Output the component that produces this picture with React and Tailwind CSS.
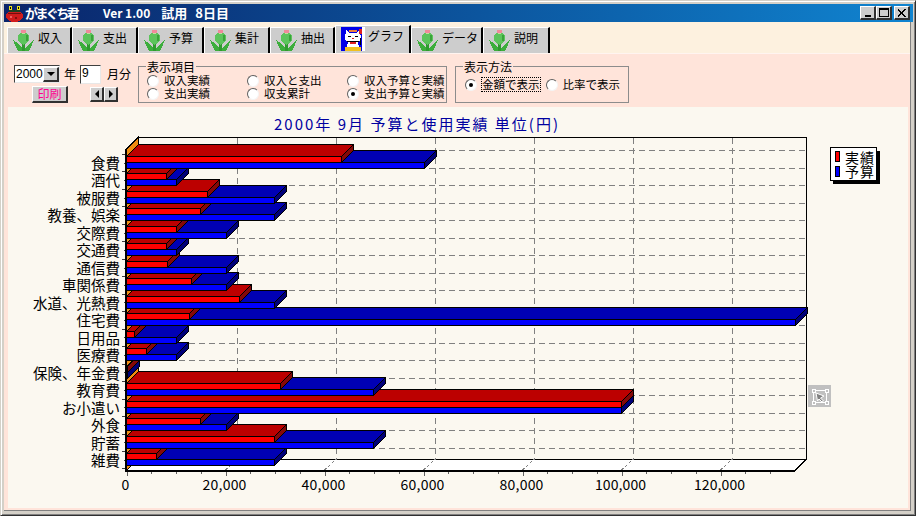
import React from 'react';

const jp = { fontFamily: '"Noto Sans CJK JP", "Noto Sans", sans-serif' };

const rows = [
  ['食費', 341, 424],
  ['酒代', 166, 176],
  ['被服費', 207, 274],
  ['教養、娯楽', 200, 274],
  ['交際費', 176, 226],
  ['交通費', 166, 176],
  ['通信費', 167, 226],
  ['車関係費', 191, 226],
  ['水道、光熱費', 239, 274],
  ['住宅費', 189, 795],
  ['日用品', 134, 176],
  ['医療費', 146, 176],
  ['保険、年金費', 127, 127],
  ['教育費', 280, 373],
  ['お小遣い', 621, 621],
  ['外食', 200, 226],
  ['貯蓄', 274, 373],
  ['雑費', 156, 274],
];

const X0 = 126.5;
const D = 12;

function Bar({ y, end, front, top, side }) {
  const pts = (a) => a.map((p) => p.join(',')).join(' ');
  return (
    <g stroke="#000" strokeWidth="1">
      <polygon points={pts([[X0, y], [X0 + D, y - D], [end + D, y - D], [end, y]])} fill={top} />
      <polygon points={pts([[end, y], [end + D, y - D], [end + D, y - D + 6], [end, y + 6]])} fill={side} />
      <rect x={X0} y={y} width={end - X0} height="6" fill={front} />
    </g>
  );
}

function Chart() {
  const order = rows.map((r, i) => ({ r, i })).reverse();
  const hLines = Array.from({ length: 18 }, (_, i) => 150 + 17.5 * i);
  const vLines = [237.5, 336.5, 435.5, 534.5, 633.5, 732.5];
  const xTicks = Array.from({ length: 27 }, (_, i) => X0 + 24.75 * i);
  const yTicks = Array.from({ length: 37 }, (_, i) => 154 + 8.735 * i);
  return (
    <svg viewBox="8 107 900 401" width="900" height="401" className="block" style={jp}>
      <g shapeRendering="crispEdges">
        <polygon points="126.5,149 138.5,137 138.5,459 126.5,470.5" fill="#f08c10" stroke="#000" />
        <rect x="138.5" y="137.5" width="668" height="321.5" fill="#fbf8f0" stroke="#000" />
        {hLines.map((y) => (
          <line key={y} x1="139" x2="806" y1={Math.round(y) + 0.5} y2={Math.round(y) + 0.5} stroke="#808080" strokeDasharray="6 4" />
        ))}
        {vLines.map((x) => (
          <line key={x} x1={x} x2={x} y1="138" y2="459" stroke="#808080" strokeDasharray="6 4" />
        ))}
        <polygon points="126.5,470.5 138.5,459 806.5,459 795,470.5" fill="#fff" stroke="#000" />
        {vLines.map((x) => (
          <line key={x} x1={x - 12} x2={x} y1="470" y2="459" stroke="#808080" strokeDasharray="3 2" />
        ))}
        {order.map(({ r, i }) => {
          const y = Math.round(156 + 17.47 * i) + 0.5;
          return (
            <g key={r[0]}>
              <Bar y={y + 6} end={r[2] + 0.5} front="#0000ff" top="#0000b4" side="#000078" />
              <Bar y={y} end={r[1] + 0.5} front="#ff0000" top="#bc0000" side="#840808" />
            </g>
          );
        })}
        <rect x="125" y="149" width="2" height="323" fill="#000" />
        <rect x="125" y="470" width="670" height="2" fill="#000" />
        {yTicks.map((y, i) => (
          <rect key={y} x={i % 2 ? 124 : 122} y={Math.round(y)} width={i % 2 ? 1 : 3} height="1" fill="#404040" />
        ))}
        {xTicks.map((x, i) => (
          <rect key={x} x={Math.round(x)} y="472" width="1" height={i % 4 ? 2 : 4} fill="#606060" />
        ))}
      </g>

      <text x="416" y="130" textAnchor="middle" fontSize="15" fill="#0000a0" textLength="284">2000年 9月 予算と使用実績 単位(円)</text>

      {rows.map((r, i) => (
        <text key={r[0]} x="120" y={169 + 17.47 * i} textAnchor="end" fontSize="14.5" fill="#000">{r[0]}</text>
      ))}

      {['0', '20,000', '40,000', '60,000', '80,000', '100,000', '120,000'].map((t, i) => (
        <text key={t} x={X0 - 1 + 99 * i} y="490" textAnchor="middle" fontSize="14" fill="#000" textLength={t.length === 1 ? undefined : t.length * 7.3}>{t}</text>
      ))}

      <g shapeRendering="crispEdges">
        <rect x="833" y="151" width="47" height="33" fill="#000" />
        <rect x="830.5" y="147.5" width="46" height="33" fill="#fff" stroke="#000" />
        <rect x="835.5" y="151.5" width="4" height="10" fill="#ff0000" stroke="#000" />
        <rect x="835.5" y="166.5" width="4" height="10" fill="#0000ff" stroke="#000" />
      </g>
      <text x="845" y="163" fontSize="14" fill="#000" textLength="29">実績</text>
      <text x="845" y="177" fontSize="14" fill="#000" textLength="29">予算</text>

      <g shapeRendering="crispEdges">
        <rect x="808" y="385" width="23" height="22" fill="#c0c0c0" />
        <rect x="813.5" y="390.5" width="13" height="12" fill="none" stroke="#fff" />
        <rect x="812" y="389" width="3" height="3" fill="#c0c0c0" stroke="#fff" />
        <rect x="825" y="389" width="3" height="3" fill="#c0c0c0" stroke="#fff" />
        <rect x="812" y="401" width="3" height="3" fill="#c0c0c0" stroke="#fff" />
        <rect x="825" y="401" width="3" height="3" fill="#c0c0c0" stroke="#fff" />
      </g>
      <polygon points="816,393 824,396 820.5,398 823.5,401 822,402 819,399 817.5,401" fill="#808080" stroke="#fff" strokeWidth="1" />
    </svg>
  );
}

function Tulip() {
  return (
    <svg width="21" height="21" viewBox="0 0 21 21" className="shrink-0" shapeRendering="crispEdges">
      <polygon points="0,10 3,12 9,18 10,21 5,21 3,17" fill="#3cae3c" />
      <polygon points="21,10 18,12 12,18 11,21 16,21 18,17" fill="#3cae3c" />
      <rect x="9" y="13" width="3" height="8" fill="#2f9a2f" />
      <ellipse cx="10.5" cy="8" rx="5.5" ry="6.5" fill="#5cc45c" />
      <rect x="13" y="5" width="2" height="6" fill="#3aa43a" />
      <rect x="8" y="0" width="5" height="3" fill="#f08a9a" />
      <rect x="9" y="3" width="3" height="1" fill="#c8d8a0" />
    </svg>
  );
}

function Cat() {
  return (
    <svg width="24" height="24" viewBox="0 0 24 24" className="shrink-0" shapeRendering="crispEdges">
      <rect width="24" height="24" fill="#0000e8" />
      <rect x="21" y="0" width="3" height="24" fill="#fff" />
      <path d="M5 3 L9 6 L15 6 L19 3 L20 12 L17 16 L19 22 L5 22 L7 16 L4 12 Z" fill="#fff" />
      <rect x="8" y="3" width="8" height="2" fill="#f08040" />
      <rect x="18" y="2" width="3" height="5" fill="#e02020" />
      <rect x="7" y="9" width="3" height="1" fill="#000" />
      <rect x="14" y="9" width="3" height="1" fill="#000" />
      <rect x="11" y="11" width="2" height="1" fill="#e02020" />
      <rect x="6" y="14" width="12" height="1" fill="#000" />
      <rect x="19" y="11" width="1" height="7" fill="#000" />
      <rect x="4" y="20" width="16" height="4" fill="#f0c020" />
      <rect x="9" y="15" width="6" height="2" fill="#e02020" />
    </svg>
  );
}

function AppIcon() {
  return (
    <svg width="17" height="17" viewBox="0 0 17 17" className="shrink-0" shapeRendering="crispEdges">
      <ellipse cx="8.5" cy="11" rx="8.5" ry="6" fill="#d01c1c" />
      <rect x="2" y="8" width="13" height="1" fill="#701010" />
      <rect x="4" y="11" width="2" height="2" fill="#f06060" />
      <rect x="9" y="12" width="2" height="2" fill="#801010" />
      <rect x="3" y="1" width="3" height="4" fill="#e8e020" />
      <rect x="11" y="1" width="3" height="4" fill="#e8e020" />
      <rect x="4" y="2" width="1" height="2" fill="#000" />
      <rect x="12" y="2" width="1" height="2" fill="#000" />
      <rect x="3" y="5" width="11" height="2" fill="#204020" />
    </svg>
  );
}

function Tab({ label, width, active }) {
  return (
    <div
      className={`flex items-center shrink-0 bg-[#cdcdcd] border-t border-l border-t-white border-l-white border-r-2 border-r-black ${active ? 'h-[28px] gap-[3px] pl-[5px] items-start pt-[1px]' : 'h-[26px] gap-[4px] pl-[5px]'}`}
      style={{ width }}
    >
      {active ? <Cat /> : <Tulip />}
      <span className={`text-[12px] leading-[16px] text-black ${active ? 'mt-[1px]' : 'mb-[6px]'}`}>{label}</span>
    </div>
  );
}

function Radio({ label, checked, focus }) {
  return (
    <div className="flex items-center h-[13px]">
      <span className="flex items-center justify-center w-[12px] h-[12px] rounded-full bg-white border border-t-[#606060] border-l-[#606060] border-r-[#f4f4f4] border-b-[#f4f4f4] shrink-0">
        {checked && <span className="w-[4px] h-[4px] rounded-full bg-black" />}
      </span>
      <span className={`ml-[5px] text-[11.5px] leading-[13px] text-black whitespace-nowrap ${focus ? 'outline-1 outline-dotted outline-black' : ''}`}>{label}</span>
    </div>
  );
}

function Group({ title, width, children }) {
  return (
    <div className="relative h-[37px] mt-[12px] border border-[#8c8c8c] shrink-0" style={{ width }}>
      <span className="absolute left-[7px] -top-[7px] bg-[#ffe4da] px-[1px] text-[12px] leading-[13px] text-black">{title}</span>
      {children}
    </div>
  );
}

function Btn({ className, children }) {
  return (
    <div className={`flex items-center justify-center bg-[#cdcdcd] border-t border-l border-t-white border-l-white border-r-2 border-b-2 border-r-[#303030] border-b-[#303030] ${className}`}>
      {children}
    </div>
  );
}

const tabs = [
  ['収入', 65], ['支出', 66], ['予算', 66], ['集計', 66], ['抽出', 65],
  ['グラフ', 76], ['データ', 72], ['説明', 67],
];

export default function App() {
  return (
    <div className="w-[916px] h-[516px] bg-[#d4d0c8] border-t border-l border-t-[#d4d0c8] border-l-[#d4d0c8] border-r border-b border-r-[#303030] border-b-[#303030] shadow-[inset_1px_1px_0_#ffffff,inset_-1px_-1px_0_#808080] pt-[3px] pl-[3px] pr-[2px] pb-[4px] flex flex-col overflow-hidden" style={jp}>
      <div className="h-[18px] shrink-0 flex items-center bg-gradient-to-r from-[#0a246a] to-[#1084d0] pl-[2px] pr-[3px]">
        <AppIcon />
        <span className="ml-[2px] text-[13px] font-bold text-white tracking-[-2.6px] leading-[16px] w-[54px]">がまぐち君</span>
        <span className="ml-[24px] text-[12px] font-bold text-white leading-[16px] whitespace-pre">Ver 1.00</span>
        <span className="ml-[11px] text-[13px] font-bold text-white leading-[16px] whitespace-pre">試用</span>
        <span className="ml-[8px] text-[13px] font-bold text-white leading-[16px] whitespace-pre">8日目</span>
        <div className="ml-auto flex items-center">
          <Btn className="w-[16px] h-[14px] items-end pb-[1px]"><span className="w-[6px] h-[2px] bg-black" /></Btn>
          <Btn className="w-[16px] h-[14px]"><span className="w-[10px] h-[9px] border border-t-2 border-black" /></Btn>
          <Btn className="w-[16px] h-[14px] ml-[2px]">
            <svg width="9" height="8" viewBox="0 0 9 8" shapeRendering="crispEdges"><path d="M1 0 L4.5 3 L8 0 L9 1 L5.5 4 L9 7 L8 8 L4.5 5 L1 8 L0 7 L3.5 4 L0 1 Z" fill="#000" /></svg>
          </Btn>
        </div>
      </div>

      <div className="flex-1 mr-[2px] flex flex-col bg-[#ffe4da] border-r border-b border-r-[#808080] border-b-[#808080] min-h-0">
        <div className="h-[32px] shrink-0 bg-[#fdf1df] flex items-end pl-[3px] border-b border-b-[#fff4f0]">
          {tabs.map(([label, w]) => (
            <Tab key={label} label={label} width={w} active={label === 'グラフ'} />
          ))}
        </div>

        <div className="h-[53px] shrink-0 flex pl-[10px]">
          <div className="w-[124px] shrink-0 flex flex-col">
            <div className="flex items-center h-[20px] mt-[10px]">
              <div className="w-[46px] h-[18px] flex items-center bg-white border border-t-[#404040] border-l-[#404040] border-r-[#e8e8e8] border-b-[#e8e8e8]">
                <span className="text-[12px] leading-[14px] text-black pl-[1px] w-[28px] font-['Liberation_Sans']">2000</span>
                <Btn className="w-[16px] h-[15px]"><span className="w-0 h-0 border-x-[4px] border-x-transparent border-t-[4px] border-t-black" /></Btn>
              </div>
              <span className="ml-[4px] text-[12px] leading-[14px] text-black">年</span>
              <span className="ml-[4px] w-[21px] h-[19px] bg-white border border-t-[#404040] border-l-[#404040] border-r-[#e8e8e8] border-b-[#e8e8e8] text-[12px] leading-[15px] pl-[1px] text-black font-['Liberation_Sans']">9</span>
              <span className="ml-[6px] text-[12px] leading-[14px] text-black whitespace-nowrap">月分</span>
            </div>
            <div className="flex items-center mt-[2px]">
              <Btn className="ml-[18px] w-[36px] h-[17px]"><span className="text-[12px] leading-[14px] text-[#ff0090]">印刷</span></Btn>
              <Btn className="ml-[22px] w-[14px] h-[15px]"><span className="w-0 h-0 border-y-[4px] border-y-transparent border-r-[4px] border-r-black" /></Btn>
              <Btn className="w-[14px] h-[15px]"><span className="w-0 h-0 border-y-[4px] border-y-transparent border-l-[4px] border-l-black" /></Btn>
            </div>
          </div>

          <Group title="表示項目" width={309}>
            <div className="grid grid-cols-[100px_100px_100px] pl-[8px] pt-[7px]">
              <Radio label="収入実績" />
              <Radio label="収入と支出" />
              <Radio label="収入予算と実績" />
              <Radio label="支出実績" />
              <Radio label="収支累計" />
              <Radio label="支出予算と実績" checked />
            </div>
          </Group>

          <div className="w-[8px] shrink-0" />

          <Group title="表示方法" width={174}>
            <div className="flex items-center gap-[6px] pl-[9px] pt-[11px]">
              <Radio label="金額で表示" checked focus />
              <Radio label="比率で表示" />
            </div>
          </Group>
        </div>

        <div className="flex-1 ml-[4px] mr-[2px] mb-[2px] bg-[#fbf8f0] min-h-0 overflow-hidden">
          <Chart />
        </div>
      </div>
    </div>
  );
}
